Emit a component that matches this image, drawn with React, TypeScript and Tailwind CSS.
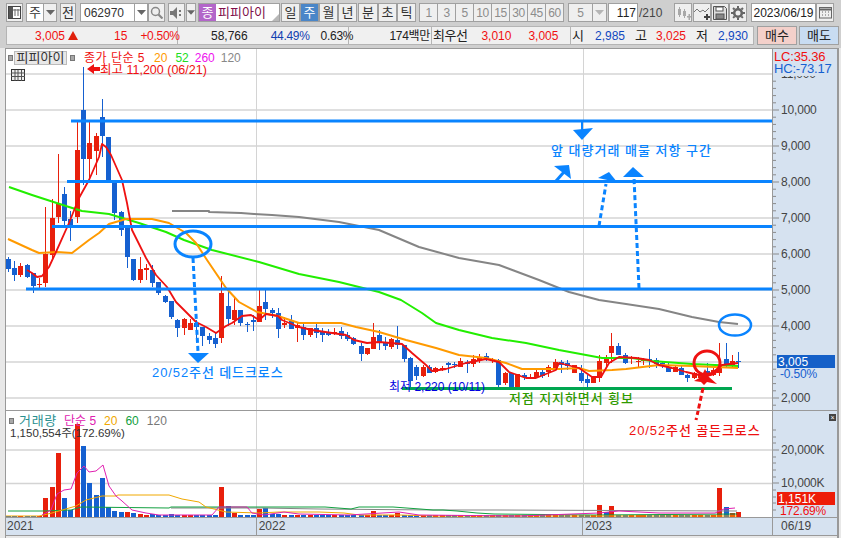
import type { ReactNode } from 'react'

type Candle = [number, 'r' | 'b', number, number, number, number]

// x, colour, body top, body bottom, wick top, wick bottom (page pixels)
const candles: Candle[] = [
  [9, 'b', 259, 269, 257, 272], [15, 'b', 268, 275, 261, 281], [21, 'r', 266, 275, 263, 277], [28, 'b', 265, 277, 264, 278],
  [34, 'b', 273, 286, 273, 293], [40, 'r', 284, 285, 278, 290], [46, 'r', 254, 283, 207, 287], [53, 'r', 218, 255, 199, 260],
  [59, 'r', 204, 217, 154, 223], [65, 'b', 194, 221, 187, 228], [71, 'b', 219, 227, 211, 241], [78, 'r', 150, 217, 122, 223],
  [84, 'b', 110, 159, 67, 185], [90, 'r', 143, 159, 122, 178], [97, 'r', 136, 151, 133, 175], [103, 'b', 117, 136, 99, 157],
  [109, 'b', 137, 180, 137, 182], [115, 'b', 182, 213, 182, 220], [122, 'b', 212, 230, 211, 236], [128, 'b', 228, 257, 228, 268],
  [134, 'b', 259, 280, 259, 281], [141, 'r', 269, 280, 257, 283], [147, 'r', 268, 270, 264, 280], [153, 'b', 270, 283, 265, 287],
  [159, 'b', 282, 293, 282, 295], [166, 'b', 296, 302, 295, 303], [172, 'b', 301, 317, 301, 319], [178, 'b', 320, 328, 319, 337],
  [185, 'r', 319, 328, 318, 335], [191, 'r', 323, 330, 319, 330], [197, 'b', 323, 327, 320, 343], [203, 'b', 327, 336, 327, 346],
  [210, 'b', 336, 340, 333, 344], [216, 'b', 338, 344, 333, 348], [222, 'r', 293, 338, 276, 343], [229, 'b', 306, 319, 290, 326],
  [235, 'r', 310, 320, 297, 325], [241, 'b', 310, 323, 310, 326], [248, 'b', 324, 325, 322, 332], [254, 'b', 320, 322, 315, 331],
  [260, 'r', 306, 322, 290, 322], [266, 'b', 302, 309, 289, 320], [273, 'b', 310, 313, 308, 318], [279, 'b', 313, 329, 308, 338],
  [285, 'r', 323, 325, 317, 328], [292, 'b', 321, 329, 315, 329], [298, 'r', 325, 328, 322, 342], [304, 'b', 327, 335, 323, 340],
  [311, 'r', 328, 335, 328, 337], [317, 'b', 328, 333, 323, 338], [323, 'b', 332, 335, 328, 342], [329, 'b', 332, 335, 329, 336],
  [335, 'r', 332, 333, 328, 335], [342, 'b', 331, 336, 327, 339], [348, 'b', 335, 339, 332, 341], [354, 'b', 338, 344, 337, 345],
  [362, 'b', 346, 354, 343, 361], [368, 'r', 348, 354, 348, 355], [374, 'r', 337, 349, 323, 349], [380, 'b', 335, 343, 330, 350],
  [386, 'b', 342, 346, 337, 350], [392, 'r', 339, 347, 338, 349], [398, 'b', 340, 345, 326, 349], [405, 'b', 345, 359, 345, 362],
  [411, 'b', 358, 381, 357, 390], [417, 'b', 367, 376, 365, 380], [424, 'r', 367, 376, 365, 377], [430, 'b', 367, 373, 365, 373],
  [436, 'r', 368, 372, 367, 373], [443, 'r', 368, 369, 366, 371], [449, 'b', 363, 365, 362, 373], [455, 'b', 364, 365, 362, 368],
  [461, 'r', 361, 367, 358, 367], [468, 'b', 362, 364, 360, 373], [474, 'r', 359, 364, 355, 367], [480, 'r', 358, 360, 354, 363],
  [487, 'b', 356, 360, 353, 361], [493, 'r', 359, 361, 358, 363], [499, 'b', 360, 385, 359, 388], [506, 'r', 373, 383, 372, 385],
  [512, 'b', 373, 388, 373, 389], [518, 'r', 374, 387, 374, 388], [525, 'b', 375, 377, 373, 380], [531, 'r', 377, 378, 374, 379],
  [537, 'r', 372, 377, 370, 377], [543, 'b', 372, 376, 368, 378], [549, 'r', 367, 372, 365, 377], [556, 'r', 362, 368, 359, 371],
  [562, 'b', 362, 365, 360, 373], [568, 'b', 363, 366, 360, 370], [575, 'r', 365, 373, 365, 373], [582, 'b', 373, 381, 365, 383],
  [588, 'b', 379, 383, 375, 387], [594, 'r', 377, 383, 376, 383], [600, 'r', 361, 378, 355, 382], [607, 'r', 359, 363, 355, 368],
  [612, 'r', 346, 353, 333, 363], [619, 'b', 346, 355, 343, 355], [626, 'b', 355, 363, 353, 364], [632, 'r', 357, 358, 356, 364],
  [639, 'r', 361, 362, 357, 367], [644, 'r', 359, 361, 358, 365], [650, 'b', 359, 360, 349, 368], [657, 'b', 360, 364, 358, 368],
  [663, 'b', 363, 365, 362, 368], [669, 'b', 367, 372, 363, 372], [676, 'r', 367, 372, 365, 372], [682, 'b', 368, 375, 365, 375],
  [688, 'b', 375, 378, 374, 382], [695, 'r', 373, 378, 372, 379], [701, 'r', 375, 378, 373, 379], [708, 'b', 371, 375, 363, 375],
  [714, 'r', 370, 375, 368, 376], [720, 'r', 365, 373, 343, 376], [727, 'b', 359, 365, 343, 368], [733, 'r', 361, 365, 355, 368],
  [739, 'b', 361, 362, 352, 368],
]

const volTop: Record<number, number> = {
  9: 516, 15: 516, 21: 516, 28: 516, 34: 516, 40: 516, 46: 498, 53: 487, 59: 453, 65: 498, 71: 510, 78: 424, 84: 446, 90: 483,
  97: 495, 103: 478, 109: 507, 115: 511, 122: 512, 128: 512, 134: 513, 141: 514, 147: 515, 153: 514, 159: 515, 172: 514,
  222: 487, 229: 506, 235: 513, 260: 509, 266: 508, 273: 514, 279: 514, 374: 511, 398: 513, 600: 505, 607: 512, 612: 506,
  720: 488, 727: 507, 733: 513, 739: 512,
}
const volColor: Record<number, 'r' | 'b'> = { 90: 'b', 97: 'b', 128: 'r', 398: 'r', 607: 'b', 739: 'r' }

const ma5 = '28,270 33,273 38,277 43,276 50,267 57,252 70,223 80,198 90,180 100,157 103,144 107,147 112,155 123,180 128,203 133,230 138,240 147,258 157,275 168,287 177,302 197,322 207,327 217,333 227,326 233,323 243,316 252,315 260,320 267,314 279,316 283,320 300,327 313,330 333,333 347,335 355,340 368,343 380,342 403,344 413,353 427,365 433,371 447,369 467,363 487,359 500,362 510,372 527,378 537,378 557,370 560,363 580,368 593,377 602,377 610,363 620,357 637,358 650,360 660,365 673,368 687,372 700,375 713,373 723,365 739,363'
const ma20 = '9,239 33,250 40,253 58,252 73,253 90,240 100,233 110,224 127,219 153,219 170,223 187,233 197,243 208,260 227,288 240,302 258,312 279,316 300,323 342,323 357,327 380,332 407,340 437,348 460,355 487,358 507,363 523,369 560,369 580,368 590,371 613,370 627,369 660,365 693,366 739,368'
const ma52 = '10,187 33,195 70,207 83,211 110,214 140,223 167,232 185,240 213,250 260,262 280,268 300,274 340,282 380,292 402,300 423,313 437,323 460,330 493,338 527,343 560,350 587,355 603,358 633,358 653,361 693,364 739,366'
const ma120 = '173,211 210,211 210,212 242,213 255,214 273,215 300,217 340,222 380,230 420,247 460,258 500,265 540,280 570,292 600,300 627,304 660,309 693,317 720,322 739,324'

const volMa5 = '43,515 52,510 58,494 65,490 72,489 78,473 85,466 90,472 97,471 104,465 110,486 117,496 123,501 133,510 147,513 160,515 213,515 220,507 230,507 248,507 253,513 265,515 285,512 300,514 350,515 400,512 420,515 520,516 600,513 620,511 660,513 716,513 725,509 736,508'
const volMa20 = '7,516 40,516 53,513 77,506 87,500 103,496 117,496 119,495 170,495 183,499 200,502 207,507 227,512 260,513 280,512 320,512 345,513 360,515 400,515 436,516 738,516'
const volMa60 = '9,511 43,511 72,510 82,507 170,508 172,507 263,507 326,507 352,509 360,507 394,507 421,509 434,510 444,510 458,511 478,513 495,514 595,515 738,514'
const volMa120 = '172,508 263,508 320,509 434,510 498,510 738,511'

const Btn = ({ className = '', children }: { className?: string; children?: ReactNode }) => (
  <div className={`h-[19px] flex items-center justify-center border border-[#a0a0a0] bg-[#efefef] text-[13px] text-[#333] ${className}`}>
    {children}
  </div>
)

const Arrow = ({ light }: { light?: boolean }) => (
  <svg width="9" height="5" viewBox="0 0 9 5">
    <path d="M0 0h9L4.500 5z" fill={light ? '#b5b5b5' : '#666'} />
  </svg>
)

const Square = () => <div className="w-[5px] h-[6px] bg-[#a8a8a8] border border-[#777]" />

export default function App() {
  const horizontals = [74, 110, 146, 182, 218, 254, 290, 326, 362, 398]
  const ticks: number[] = []
  for (let y = 74; y < 410; y += 7.2) ticks.push(y)

  return (
    <div className="relative w-[841px] h-[538px] flex flex-col overflow-hidden bg-[#cfcfcf] font-['Liberation_Sans','Noto_Sans_CJK_KR',sans-serif]">
      {/* top toolbar */}
      <div className="flex items-center h-[19px] mt-[3px] pl-[6px]">
        <Btn className="w-[17px]">
          <svg width="13" height="13" viewBox="0 0 13 13">
            <rect x="0.500" y="0.500" width="12" height="12" fill="#fff" stroke="#444" />
            <rect x="1" y="1" width="4" height="11" fill="#555" />
            <path d="M7 3v7M10 3v7M5 4h7" stroke="#666" fill="none" />
          </svg>
        </Btn>
        <Btn className="w-[18px] ml-[3px] !bg-white">주</Btn>
        <Btn className="w-[13px] border-l-0"><Arrow /></Btn>
        <Btn className="w-[16px] ml-[3px]">전</Btn>
        <Btn className="w-[55px] ml-[4px] !bg-white justify-start pl-[3px] !text-[12px]">062970</Btn>
        <Btn className="w-[13px] border-l-0 !bg-white"><Arrow /></Btn>
        <Btn className="w-[17px]">
          <svg width="13" height="13" viewBox="0 0 13 13" fill="none" stroke="#888" strokeWidth="1.500">
            <circle cx="5.500" cy="5.500" r="4" />
            <path d="M8.500 8.500L12.500 12.500" strokeWidth="2.200" />
          </svg>
        </Btn>
        <Btn className="w-[17px] ml-[3px]">
          <svg width="13" height="12" viewBox="0 0 13 12" fill="#777">
            <path d="M0 4h3l4-4v12L3 8H0z" />
            <path d="M9 3h2v2H9zM9 7h2v2H9z" />
          </svg>
        </Btn>
        <Btn className="w-[10px] ml-[1px]"><Arrow /></Btn>
        <div className="w-[82px] h-[19px] ml-[2px] relative flex items-center bg-white border border-[#a0a0a0]">
          <span className="w-[17px] h-[17px] flex items-center justify-center bg-[#b366c9] text-white text-[13px]">종</span>
          <span className="ml-[2px] text-[13px] text-[#80104a]">피피아이</span>
          <span className="absolute right-0 bottom-0 w-0 h-0 border-l-[7px] border-l-transparent border-b-[7px] border-b-[#b8b8b8]" />
        </div>
        <Btn className="w-[19px] ml-[1px]">일</Btn>
        <Btn className="w-[19px] !bg-[#4a86c8] !text-white">주</Btn>
        <Btn className="w-[19px]">월</Btn>
        <Btn className="w-[19px]">년</Btn>
        <Btn className="w-[20px] ml-[1px]">분</Btn>
        <Btn className="w-[19px]">초</Btn>
        <Btn className="w-[19px]">틱</Btn>
        <div className="flex ml-[3px]">
          {['1', '3', '5', '10', '15', '30', '45', '60'].map((n) => (
            <Btn key={n} className="w-[19px] -ml-px first:ml-0 !text-[12px] tracking-[-0.5px] !text-[#8c8c8c]">{n}</Btn>
          ))}
        </div>
        <Btn className="w-[25px] ml-[4px] !text-[12px] !text-[#8c8c8c]">5</Btn>
        <Btn className="w-[14px] border-l-0"><Arrow light /></Btn>
        <div className="w-[30px] h-[19px] ml-[1px] flex items-center justify-end pr-[1px] bg-white border border-[#a0a0a0] text-[12px] text-[#222]">117</div>
        <span className="w-[26px] ml-[1px] text-[12px] text-[#444]">/210</span>
        <Btn className="w-[18px] ml-[9px]">
          <svg width="15" height="14" viewBox="0 0 15 14" fill="#a8a8a8">
            <path d="M3 1h1v2h1v6H4v2H3V9H2V3h1zM8 3h1v2h1v5H9v2H8v-2H7V5h1z" />
            <path d="M11 10h1.500V8H14v2h1v1.500h-1V14h-1.500v-2.500H11z" />
          </svg>
        </Btn>
        <Btn className="w-[18px] ml-[1px]">
          <svg width="16" height="14" viewBox="0 0 16 14" fill="none">
            <path d="M0 6l3-3 3 3 3-2 2 2 4-4" stroke="#777" />
            <path d="M10 10h2V8h2v2h2v2h-2v2h-2v-2h-2z" fill="#444" />
          </svg>
        </Btn>
        <Btn className="w-[18px]">
          <svg width="14" height="14" viewBox="0 0 14 14">
            <path d="M0.500 0.500h11l2 2v11h-13z" fill="#ddd" stroke="#555" />
            <rect x="3" y="1" width="7" height="4" fill="#fff" stroke="#555" />
            <rect x="3" y="8" width="8" height="5" fill="#888" stroke="#555" />
          </svg>
        </Btn>
        <Btn className="w-[18px]">
          <svg width="14" height="14" viewBox="0 0 14 14">
            <circle cx="7" cy="7" r="3.800" fill="none" stroke="#666" strokeWidth="2.600" />
            <path d="M7 0v14M0 7h14M2 2l10 10M12 2L2 12" stroke="#666" strokeWidth="2" strokeDasharray="2.200 9.600" />
          </svg>
        </Btn>
        <Btn className="w-[65px] ml-[4px] !bg-white !text-[12px] !text-[#222]">2023/06/19</Btn>
        <Btn className="w-[18px]">
          <svg width="13" height="13" viewBox="0 0 13 13" fill="none" stroke="#666">
            <rect x="0.500" y="1.500" width="12" height="10.500" />
            <path d="M0.500 3.500h12" strokeWidth="2" />
            <path d="M3 6h1M6 6h1M9 6h1M3 9h1M6 9h1M9 9h1" />
          </svg>
        </Btn>
      </div>

      {/* quote row */}
      <div className="flex items-center h-[19px] mt-[4px] pl-[6px] text-[12px]">
        <div className="w-[748px] h-[19px] flex items-center bg-[#f0f0f0] border border-[#b4b4b4]">
          <div className="w-[171px] h-full flex items-center border-r border-[#b4b4b4] text-[#f01010]">
            <span className="ml-[28px]">3,005</span>
            <span className="ml-[3px] w-0 h-0 border-l-[5px] border-l-transparent border-r-[5px] border-r-transparent border-b-[9px] border-b-[#e0200c]" />
            <span className="ml-[36px]">15</span>
            <span className="ml-[13px] tracking-[-0.3px]">+0.50%</span>
          </div>
          <div className="w-[171px] h-full flex items-center border-r border-[#b4b4b4]">
            <span className="ml-[33px] text-[#222]">58,766</span>
            <span className="ml-[23px] text-[#1040b0] tracking-[-0.3px]">44.49%</span>
            <span className="ml-[11px] text-[#222] tracking-[-0.3px]">0.63%</span>
          </div>
          <div className="w-[83px] h-full flex items-center justify-end pr-[1px] border-r border-[#b4b4b4] text-[#222] tracking-[-0.3px]">174백만</div>
          <div className="w-[139px] h-full flex items-center border-r border-[#b4b4b4]">
            <span className="ml-[1px] text-[#222] text-[13px] tracking-[-0.5px]">최우선</span>
            <span className="ml-[14px] text-[#f01010]">3,010</span>
            <span className="ml-[17px] text-[#f01010]">3,005</span>
          </div>
          <div className="flex items-center h-full">
            <span className="ml-[1px] text-[13px] text-[#222]">시</span>
            <span className="ml-[11px] text-[#1048c0]">2,985</span>
            <span className="ml-[10px] text-[13px] text-[#222]">고</span>
            <span className="ml-[9px] text-[#f01010]">3,025</span>
            <span className="ml-[10px] text-[13px] text-[#222]">저</span>
            <span className="ml-[10px] text-[#1048c0]">2,930</span>
          </div>
        </div>
        <div className="w-[40px] h-[19px] ml-[3px] flex items-center justify-center bg-[#f4d0ca] border border-[#a0a0a0] text-[13px] text-[#222]">매수</div>
        <div className="w-[40px] h-[19px] ml-[2px] flex items-center justify-center bg-[#c8dcf2] border border-[#a0a0a0] text-[13px] text-[#222]">매도</div>
      </div>

      {/* chart block */}
      <div className="flex mt-[3px] h-[490px] bg-[#e8e8e8]">
        <div className="w-[5px] shrink-0" />
        <div className="flex flex-col w-[834px] border-l border-t border-[#999] border-r-2 border-r-[#999]">
          {/* price pane */}
          <div className="flex h-[362px] border-b border-b-[#999]">
            <div className="w-[767px] relative bg-white overflow-hidden">
              <svg className="block" width="767" height="361" viewBox="7 49 767 361">
                {horizontals.map((y) => (
                  <line key={y} x1="6" x2="774" y1={y} y2={y} stroke="#d4d4d4" strokeWidth="1.500" />
                ))}
                <line x1="257.500" x2="257.500" y1="48" y2="410" stroke="#d4d4d4" />
                <line x1="584.500" x2="584.500" y1="48" y2="410" stroke="#d4d4d4" />

                {candles.map(([x, c, top, bot, wt, wb]) => (
                  <g key={x} fill={c === 'r' ? '#e8200c' : '#1560d0'} shapeRendering="crispEdges">
                    <rect x={x} y={wt} width="1" height={wb - wt} />
                    <rect x={x - 2} y={top} width="5" height={Math.max(bot - top, 1)} />
                  </g>
                ))}

                <g fill="none" strokeLinejoin="round">
                  <polyline points={ma120} stroke="#858585" strokeWidth="2" />
                  <polyline points={ma52} stroke="#22ee00" strokeWidth="2" />
                  <polyline points={ma20} stroke="#ff9a00" strokeWidth="2" />
                  <polyline points={ma5} stroke="#ee1111" strokeWidth="1.800" />
                </g>

                {/* hand drawn marks */}
                <g stroke="#0a84ff" fill="none">
                  <line x1="72" x2="774" y1="121" y2="121" strokeWidth="3" />
                  <line x1="68" x2="774" y1="181.500" y2="181.500" strokeWidth="3" />
                  <line x1="53" x2="774" y1="226.500" y2="226.500" strokeWidth="3" />
                  <line x1="27" x2="774" y1="289" y2="289" strokeWidth="3" />
                  <ellipse cx="194" cy="244" rx="18" ry="13" strokeWidth="3" />
                  <ellipse cx="736" cy="325" rx="16" ry="10.500" strokeWidth="2.500" />
                  <g strokeWidth="3" strokeDasharray="5 3">
                    <line x1="194" y1="258" x2="199" y2="352" />
                    <line x1="600" y1="226" x2="607" y2="184" />
                    <line x1="640" y1="288" x2="635" y2="178" />
                  </g>
                  <line x1="583" y1="122" x2="583" y2="130" strokeWidth="2" />
                  <line x1="557" y1="181" x2="565" y2="172" strokeWidth="3" />
                </g>
                <g fill="#0a84ff">
                  <polygon points="189,353 210,353 199,363" />
                  <polygon points="574,130 594,128 583,140" />
                  <polygon points="555,166 570,165 572,179" />
                  <polygon points="599,178 610,172 618,182" />
                  <polygon points="624,177 634,167 645,177" />
                </g>
                <line x1="403" x2="733" y1="388.500" y2="388.500" stroke="#00a650" strokeWidth="3" />
                <ellipse cx="708" cy="363" rx="13" ry="12" fill="none" stroke="#ee1111" strokeWidth="3" />
                <polygon points="706,369 710,377 718,384 708,382 705,385 702,382 695,381 702,377" fill="#ee1111" />
                <line x1="704" y1="388" x2="699.300" y2="410" stroke="#ee1111" strokeWidth="3" strokeDasharray="5 3" />
                <path d="M88 69l7-5v3h6v4h-6v3z" fill="#ee1111" />
              </svg>

              {/* legend */}
              <div className="absolute left-[2px] top-[2px] h-[14px] flex items-center text-[12px]">
                <Square />
                <span className="ml-[1px] w-[53px] h-[14px] flex items-center justify-center bg-[#e8e8e8] border border-[#bbb] text-[13px] text-[#333]">피피아이</span>
                <span className="ml-[3px]"><Square /></span>
                <span className="ml-[9px] text-[#f01010] tracking-[0.5px]">종가 단순 5</span>
                <span className="ml-[9px] text-[#ff9a00]">20</span>
                <span className="ml-[8px] text-[#22dd22]">52</span>
                <span className="ml-[6px] text-[#ee11ee]">260</span>
                <span className="ml-[6px] text-[#888]">120</span>
              </div>
              <svg className="absolute left-[5px] top-[20px]" width="14" height="12" viewBox="0 0 14 12" fill="none" stroke="#555">
                <rect x="0.500" y="0.500" width="13" height="11" fill="#eee" stroke="#333" />
                <path d="M0 4h14M0 7.500h14M4 1v11M7 1v11M10.500 1v11" />
              </svg>
              <span className="absolute left-[94px] top-[14px] text-[12.500px] leading-[14px] text-[#f01010] whitespace-nowrap">최고 11,200 (06/21)</span>
              <span className="absolute left-[383px] top-[331px] text-[12px] leading-[14px] text-[#0000e0] whitespace-nowrap">최저 2,220 (10/11)</span>
              <span className="absolute left-[545px] top-[94px] text-[13px] leading-[16px] font-medium text-[#0a84ff] whitespace-nowrap tracking-[1px]">앞 대량거래 매물 저항 구간</span>
              <span className="absolute left-[146px] top-[316px] text-[13px] leading-[16px] font-medium text-[#0a84ff] whitespace-nowrap tracking-[0.9px]">20/52주선 데드크로스</span>
              <span className="absolute left-[503px] top-[342px] text-[13px] leading-[16px] font-medium text-[#2f9a00] whitespace-nowrap tracking-[0.9px]">저점 지지하면서 횡보</span>
            </div>

            {/* price axis */}
            <div className="w-[65px] relative bg-[#d6e2f0] border-l border-[#999] text-[12px] text-[#444] overflow-hidden">
              <svg className="absolute left-0 top-0" width="10" height="361" viewBox="0 49 10 361">
                {ticks.map((y, i) => (
                  <line key={y} x1="0" x2={i % 5 === 0 ? 6 : 3} y1={y} y2={y} stroke="#8a8a8a" />
                ))}
              </svg>
              <div className="flex flex-col mt-[7px] pl-[8px]">
                {['11,000', '10,000', '9,000', '8,000', '7,000', '6,000', '5,000', '4,000', '', '2,000'].map((v, i) => (
                  <div key={i} className="h-[36px] flex items-center tracking-[-0.2px]">{v}</div>
                ))}
              </div>
              <div className="absolute left-0 top-0 w-full h-[27px] bg-[#d6e2f0] pl-[1px] text-[13px] leading-[12px] tracking-[-0.2px]">
                <div className="text-[#f01010] mt-[2px]">LC:35.36</div>
                <div className="text-[#1560d0]">HC:-73.17</div>
              </div>
              <div className="absolute left-[4px] top-[306px] w-[58px] h-[13px] flex items-center pl-[1px] bg-[#1560c8] text-white">3,005</div>
              <div className="absolute left-[7px] top-[319px] h-[13px] leading-[13px] text-[#1560d0] tracking-[-0.2px]">-0.50%</div>
            </div>
          </div>

          {/* volume pane */}
          <div className="flex h-[106px]">
            <div className="w-[767px] relative bg-white overflow-hidden">
              <svg className="block" width="767" height="106" viewBox="7 411 767 106">
                <line x1="6" x2="774" y1="450" y2="450" stroke="#d4d4d4" strokeWidth="1.500" />
                <line x1="6" x2="774" y1="483.500" y2="483.500" stroke="#d4d4d4" strokeWidth="1.500" />
                <line x1="257.500" x2="257.500" y1="411" y2="517" stroke="#d4d4d4" />
                <line x1="584.500" x2="584.500" y1="411" y2="517" stroke="#d4d4d4" />
                {candles.map(([x, c]) => {
                  const top = volTop[x] ?? 515
                  const col = volColor[x] ?? c
                  return <rect key={x} x={x - 2} y={top} width="5" height={517 - top} fill={col === 'r' ? '#e8200c' : '#1560d0'} shapeRendering="crispEdges" />
                })}
                <g fill="none" strokeWidth="1">
                  <polyline points={volMa120} stroke="#858585" />
                  <polyline points={volMa60} stroke="#12a040" />
                  <polyline points={volMa20} stroke="#f0a800" />
                  <polyline points={volMa5} stroke="#e020b0" />
                </g>
                <line x1="699.300" y1="410" x2="697" y2="420" stroke="#ee1111" strokeWidth="3" strokeDasharray="5 3" />
              </svg>
              <div className="absolute left-[3px] top-[3px] flex items-center h-[14px] text-[12px] whitespace-nowrap">
                <Square />
                <span className="ml-[5px] text-[13px] text-[#2a9090] tracking-[0.7px]">거래량</span>
                <span className="ml-[7px] text-[#e020b0]">단순 5</span>
                <span className="ml-[8px] text-[#f0a800]">20</span>
                <span className="ml-[8px] text-[#12a040]">60</span>
                <span className="ml-[8px] text-[#777]">120</span>
              </div>
              <span className="absolute left-[4px] top-[15px] text-[11.500px] leading-[14px] text-[#333] whitespace-nowrap">1,150,554주(172.69%)</span>
              <span className="absolute left-[623px] top-[12px] text-[13px] leading-[16px] font-medium text-[#ee1111] whitespace-nowrap tracking-[0.9px]">20/52주선 골든크로스</span>
            </div>
            <div className="w-[65px] relative bg-[#d6e2f0] border-l border-[#999] text-[12px] text-[#444] overflow-hidden">
              <svg className="absolute left-0 top-0" width="10" height="106" viewBox="0 411 10 106">
                {[430, 437, 443, 450, 457, 463, 470, 477, 483, 490, 497, 503, 510].map((y) => (
                  <line key={y} x1="0" x2={y === 450 || y === 483 ? 6 : 3} y1={y} y2={y} stroke="#8a8a8a" />
                ))}
              </svg>
              <div className="flex flex-col mt-[22px] pl-[8px]">
                <div className="h-[33px] flex items-center tracking-[-0.2px]">20,000K</div>
                <div className="h-[33px] flex items-center tracking-[-0.2px]">10,000K</div>
              </div>
              <div className="absolute left-[4px] top-[81px] w-[58px] h-[13px] flex items-center pl-[1px] bg-[#ee1c08] text-white">1,151K</div>
              <div className="absolute left-[7px] top-[94px] h-[12px] leading-[12px] text-[#f01010] tracking-[-0.2px]">172.69%</div>
              <span className="absolute right-[1px] top-[3px] w-[7px] h-[7px] flex items-center justify-center bg-[#444] text-white text-[7px] leading-none">×</span>
            </div>
          </div>

          {/* time axis */}
          <div className="flex h-[19px] bg-[#d6e2f0] border-y border-[#999] text-[12px] text-[#444]">
            <div className="w-[250px] pl-[1px] leading-[17px]">2021</div>
            <div className="w-[327px] pl-[2px] leading-[17px] border-l border-[#999]">2022</div>
            <div className="w-[190px] pl-[2px] leading-[17px] border-l border-[#999]">2023</div>
            <div className="w-[65px] pl-[8px] leading-[17px] border-l border-[#999]">06/19</div>
          </div>
        </div>
      </div>
    </div>
  )
}
